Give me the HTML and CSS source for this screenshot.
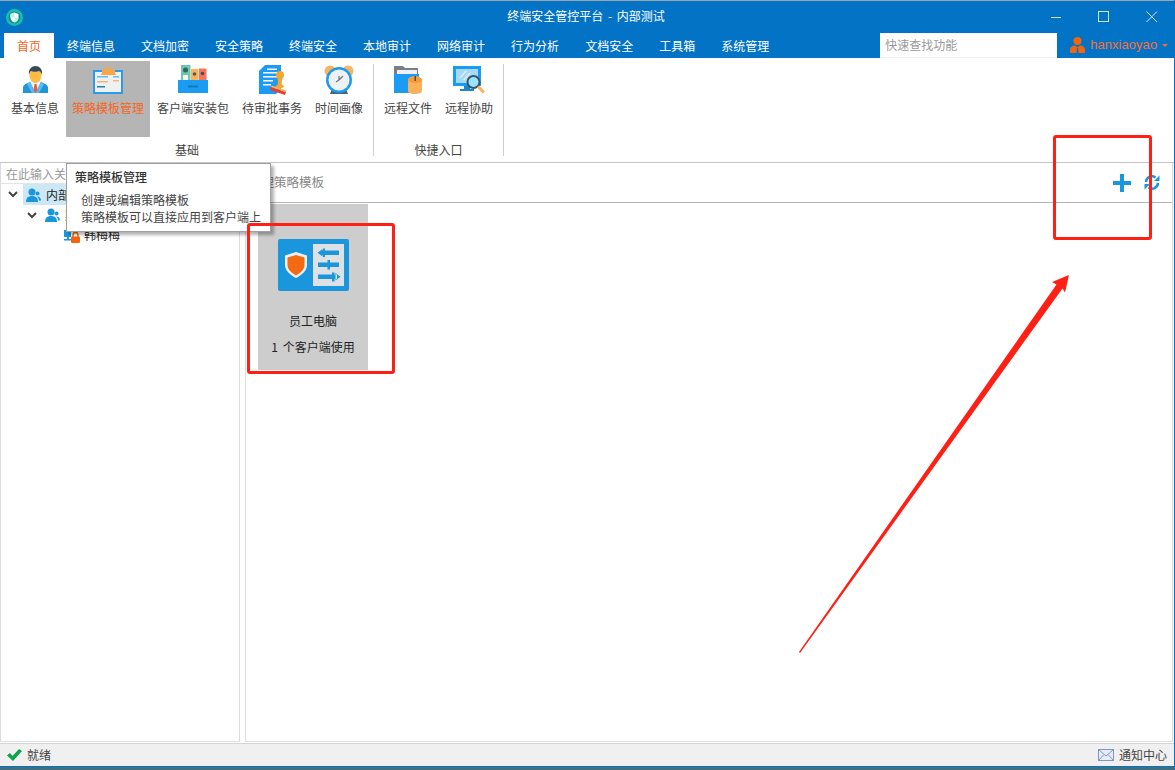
FILE: index.html
```html
<!DOCTYPE html>
<html lang="zh-CN">
<head>
<meta charset="utf-8">
<title>终端安全管控平台 - 内部测试</title>
<link rel="stylesheet" href="styles.css">
</head>
<body>
<div class="app">
  <div class="topstrip"></div>
  <header class="titlebar">
    <svg class="logo" width="17" height="17" viewBox="0 0 17 17"><circle cx="8.5" cy="8.5" r="8.5" fill="#1bbfa8"/><circle cx="8.5" cy="8.5" r="6" fill="#0b8f9c"/><path d="M8.5 3.5l4 1.5v3.5c0 2.6-1.8 4.2-4 5-2.2-.8-4-2.4-4-5V5z" fill="#fff"/><path d="M8.5 3.5V8.5H4.5V5zM8.5 8.5h4c0 2.6-1.8 4.2-4 5z" fill="#bff0e6"/></svg>
    <div class="title">终端安全管控平台 - 内部测试</div>
    <div class="winctrls">
      <svg width="12" height="12" viewBox="0 0 12 12"><path d="M1 6.500h10" stroke="#cfe3f4" stroke-width="1"/></svg>
      <svg width="12" height="12" viewBox="0 0 12 12"><rect x=".5" y=".5" width="10" height="10" fill="none" stroke="#cfe3f4"/></svg>
      <svg width="12" height="12" viewBox="0 0 12 12"><path d="M.5.500l10.500 10.500M11 .5L.5 11" stroke="#cfe3f4" fill="none"/></svg>
    </div>
  </header>
  <nav class="tabbar">
    <a class="tab active">首页</a>
    <a class="tab">终端信息</a>
    <a class="tab">文档加密</a>
    <a class="tab">安全策略</a>
    <a class="tab">终端安全</a>
    <a class="tab">本地审计</a>
    <a class="tab">网络审计</a>
    <a class="tab">行为分析</a>
    <a class="tab">文档安全</a>
    <a class="tab">工具箱</a>
    <a class="tab">系统管理</a>
    <div class="quick">快速查找功能</div>
    <div class="user">
      <svg width="15" height="16" viewBox="0 0 15 16"><circle cx="7.500" cy="4" r="4" fill="#f2640f"/><path d="M0 16v-3c0-3 2.500-4.500 5-4.500l2.500 2 2.500-2c2.500 0 5 1.500 5 4.500v3z" fill="#f2640f"/><path d="M7 11h1l.5 5h-2z" fill="#0273c5"/></svg>
      <span class="uname">hanxiaoyao</span>
      <i class="caret"></i>
    </div>
  </nav>

  <section class="ribbon">
    <div class="group">
      <div class="items">
        <div class="item">
          <svg class="ricon" viewBox="0 0 32 30"><path d="M4 28v-6c1-3 5-4 8.500-5.500h8c3.500 1.500 7.500 2.500 8.500 5.500v6z" fill="#1f96dc"/><path d="M11 17l5.500 11 5.500-11-2-1h-7z" fill="#eef4f7"/><path d="M15.500 19h2l1 6-2 3-2-3z" fill="#ea5a45"/><path d="M11 16.500L8 19l5 9h3zM22 16.500l3 2.500-5 9h-3z" fill="#5bbcec"/><ellipse cx="16.500" cy="10" rx="6" ry="8" fill="#fcbd42"/><path d="M10 10c-1-6 3-9 6.500-9S24 4 23 10c-.5-2-1.500-3.500-3-4-2 1-6 1-8 0-1 .5-1.500 2-2 4z" fill="#34495a"/></svg>
          <span>基本信息</span>
        </div>
        <div class="item selected">
          <svg class="ricon" viewBox="0 0 32 30"><rect x="1" y="5" width="30" height="24" fill="#2b9bf0"/><rect x="3" y="7" width="26" height="20" fill="#eef0f2"/><path d="M10 8V4.500h4a2.500 2.500 0 0 1 5 0h4V8l1 2H9z" fill="#f8a742"/><path d="M5 11h11v1.500H5zM21 11h6v1.500h-6z" fill="#62bdf2"/><path d="M5 16h11v1.500H5zM21 15h6v1.500h-6z" fill="#f8b37a"/><path d="M5 21h8v1.500H5z" fill="#1f7fb8"/></svg>
          <span>策略模板管理</span>
        </div>
        <div class="item">
          <svg class="ricon" viewBox="0 0 32 30"><path d="M4 0h9.500v16H4z" fill="#6ec6ae"/><circle cx="8.500" cy="5" r="2.500" fill="#35606a"/><rect x="6" y="10" width="5" height="5" fill="#f4f6f6"/><path d="M14 4h7.500v12H14z" fill="#f9b15b"/><circle cx="17.500" cy="9" r="1.800" fill="#5a5a5a"/><path d="M22 3.500h7.500V16H22z" fill="#f7735c"/><circle cx="25.500" cy="8.500" r="1.800" fill="#4d4d4d"/><rect x="1" y="15" width="30" height="13" fill="#1c9bf2"/><rect x="11" y="20.500" width="10" height="2" fill="#0f7fa8"/></svg>
          <span>客户端安装包</span>
        </div>
        <div class="item">
          <svg class="ricon" viewBox="0 0 32 30"><path d="M9 0h16v24l-5 5H3V6z" fill="#1c9bf2"/><path d="M7 7h14v1.500H7zM7 11h14v1.500H7zM7 15h10v1.500H7zM7 19h8v1.500H7zM11 3.500h10V5H11z" fill="#fff"/><circle cx="24" cy="10" r="4" fill="#f5a62f"/><path d="M21.500 13h5l-1 6 3 3-9 3-.5-3 3-3z" fill="#f5a62f"/><path d="M15 22l15 5-1 3-15-5z" fill="#e8402f"/><path d="M15.500 20.500l15 5-.5 1.500-15-5z" fill="#f9b15b"/></svg>
          <span>待审批事务</span>
        </div>
        <div class="item">
          <svg class="ricon" viewBox="0 0 32 30"><circle cx="7" cy="6" r="5.500" fill="#fbb45e"/><circle cx="25" cy="6" r="5.500" fill="#fbb45e"/><path d="M7 29l2-5h14l2 5z" fill="#4a6275"/><circle cx="16" cy="15" r="13" fill="#1c9bf2"/><circle cx="16" cy="15" r="10.500" fill="#eef2f3"/><path d="M16 15l4-4M16 15l-3 2M16 15v-4" stroke="#6b7a83" stroke-width="1.300" fill="none"/></svg>
          <span>时间画像</span>
        </div>
      </div>
      <div class="glabel">基础</div>
    </div>
    <div class="sep"></div>
    <div class="group">
      <div class="items">
        <div class="item">
          <svg class="ricon" viewBox="0 0 32 30"><path d="M2 1h9l2 2h13v8H2z" fill="#7b7f84"/><rect x="5" y="5" width="20" height="7" fill="#eef0f2"/><path d="M2 9h25v19H2z" fill="#1c9bf2"/><path d="M16 15c0-5 14-5 14 0v11c0 4-14 4-14 0z" fill="#fbb05c"/><ellipse cx="23" cy="15" rx="7" ry="3" fill="#f59a3b"/><rect x="22.500" y="11" width="1.500" height="5" fill="#6b4a23"/></svg>
          <span>远程文件</span>
        </div>
        <div class="item">
          <svg class="ricon" viewBox="0 0 32 30"><rect y="1" width="28" height="20" fill="#1c9bf2"/><rect x="3" y="4" width="22" height="14" fill="#a6d9f6"/><path d="M6 13l6-7h2l-6 7zM10 15l6-7h2l-6 7z" fill="#d8effb"/><path d="M11 21h6v3h4v2H7v-2h4z" fill="#1c87cc"/><circle cx="20.500" cy="17" r="6" fill="#9de2fb" stroke="#33566b" stroke-width="2"/><path d="M25 21.500l6 6" stroke="#fbb05c" stroke-width="3"/></svg>
          <span>远程协助</span>
        </div>
      </div>
      <div class="glabel">快捷入口</div>
    </div>
    <div class="sep"></div>
  </section>

  <main class="main">
    <aside class="side">
      <div class="search">在此输入关键字搜索</div>
      <ul class="tree">
        <li class="node">
          <svg class="chev" width="10" height="7" viewBox="0 0 10 7"><path d="M1 1l4 4 4-4" fill="none" stroke="#444" stroke-width="2"/></svg>
          <div class="nodebody current">
            <svg class="people" width="15" height="14" viewBox="0 0 15 14"><circle cx="6" cy="4" r="3.500" fill="#1a96dc"/><path d="M0 14c0-4 2-6 6-6s6 2 6 6z" fill="#1a96dc"/><circle cx="11.500" cy="5.500" r="2" fill="#1a96dc"/><path d="M11 8.500c2.500 0 4 1.500 4 4h-2c0-1.500-.8-3-2-4z" fill="#1a96dc"/></svg>
            <span>内部测试</span>
          </div>
        </li>
        <li class="node lvl2">
          <svg class="chev" width="10" height="7" viewBox="0 0 10 7"><path d="M1 1l4 4 4-4" fill="none" stroke="#444" stroke-width="2"/></svg>
          <div class="nodebody">
            <svg class="people" width="15" height="14" viewBox="0 0 15 14"><circle cx="6" cy="4" r="3.500" fill="#1a96dc"/><path d="M0 14c0-4 2-6 6-6s6 2 6 6z" fill="#1a96dc"/><circle cx="11.500" cy="5.500" r="2" fill="#1a96dc"/><path d="M11 8.500c2.500 0 4 1.500 4 4h-2c0-1.500-.8-3-2-4z" fill="#1a96dc"/></svg>
            <span>默认分组</span>
          </div>
        </li>
        <li class="node lvl3">
          <svg class="client" width="16" height="16" viewBox="0 0 16 16"><path d="M0 3h7v7H5v2h2v1.500H0V12h3v-2H0z" fill="#1a96dc"/><path d="M9 10V8a2.500 2.500 0 0 1 5 0v2" fill="none" stroke="#f2640f" stroke-width="1.300"/><rect x="7" y="9.500" width="9" height="6.500" rx="1" fill="#f2640f"/></svg>
          <span>韩梅梅</span>
        </li>
      </ul>
    </aside>
    <section class="content">
      <div class="toolbar">
        <span class="crumb">管理策略模板</span>
        <div class="tools">
          <svg width="18" height="18" viewBox="0 0 18 18"><path d="M7 0h4v7h7v4h-7v7H7v-7H0V7h7z" fill="#1a96dc"/></svg>
          <svg width="16" height="17" viewBox="0 0 16 17"><path d="M2 8A6 6 0 0 1 11.500 3.500M14 9A6 6 0 0 1 4.500 13.500" fill="none" stroke="#1a96dc" stroke-width="2.500"/><path d="M15.500 1.500V7H10zM.5 15.500V10H6z" fill="#1a96dc"/></svg>
        </div>
      </div>
      <div class="cards">
        <div class="card">
          <svg class="cardicon" width="71" height="52" viewBox="0 0 71 52"><rect width="71" height="52" rx="2" fill="#1a96dc"/><rect x="35" y="5" width="31" height="42" fill="#dde1e4"/><path d="M18 13l11 3.500v9c0 6-4.500 10-11 13.500C11.500 35.500 7 31.500 7 25.500v-9z" fill="#eef0ee"/><path d="M18 16l8.500 2.500v7.500c0 4.500-3.500 7.500-8.500 10.500-5-3-8.500-6-8.500-10.500v-7.500z" fill="#f36a13"/><path d="M43 11.500h18v4.500H43zM39.500 13.750l5-3.750v7.500zM45 9.500h2v8.500h-2zM40 23.500h21v4.500H40zM49.500 21h2.500v9.500h-2.500zM40 35.500h19v4.500H40zM62.500 37.750l-5-3.750v7.500zM54 33.500h2.500v9h-2.500z" fill="#1a96dc"/></svg>
          <div class="cardname">员工电脑</div>
          <div class="cardmeta">1 个客户端使用</div>
        </div>
      </div>
    </section>
  </main>

  <footer class="status">
    <svg width="15" height="12" viewBox="0 0 15 12"><path d="M0 6.500l3-2.500 2.500 3L12 0l3 2-9 10z" fill="#0ca34a"/></svg>
    <span class="ready">就绪</span>
    <svg class="mail" width="16" height="12" viewBox="0 0 16 12"><rect x=".5" y=".5" width="15" height="11" fill="#e6ebf6" stroke="#7f95c4"/><path d="M.5.500L8 7l7.500-6.500M.5 11.500L6 5.500M15.500 11.500L10 5.500" fill="none" stroke="#7f95c4"/></svg>
    <span>通知中心</span>
  </footer>
  <div class="blueline"></div>
  <div class="desktop"></div>

  <div class="tooltip">
    <div class="tiptitle">策略模板管理</div>
    <div class="tiptext">创建或编辑策略模板</div>
    <div class="tiptext">策略模板可以直接应用到客户端上</div>
  </div>
  <div class="mark mark-card"></div>
  <div class="mark mark-tools"></div>
  <svg class="arrow" width="1175" height="770" viewBox="0 0 1175 770"><path d="M799 652L1056.500 284.500 1052 282 1069 275 1065 292.500 1062.500 288.500 800 653z" fill="#ff2015"/></svg>
</div>
</body>
</html>
```
FILE: styles.css
```css
* { box-sizing: border-box; }
html, body { margin: 0; padding: 0; background: #fff; }
body { font: 12px/16px "Noto Sans CJK SC", "Liberation Sans", sans-serif; color: #333; }
ul { list-style: none; margin: 0; padding: 0; }

.app { position: relative; width: 1175px; height: 770px; overflow: hidden; display: flex; flex-direction: column; border-right: 1px solid #0273c5; }
.topstrip { height: 1px; background: #9aa6ac; margin-right: -1px; }

.titlebar { height: 32px; background: #0273c5; display: flex; align-items: center; position: relative; padding: 0 0 0 6px; flex: none; }
.logo { flex: none; }
.title { position: absolute; left: 0; right: 2px; top: 7px; text-align: center; color: #fff; word-spacing: 2px; }
.winctrls { margin-left: auto; display: flex; gap: 36px; padding-right: 16px; }

.tabbar { height: 25px; background: #0273c5; display: flex; align-items: stretch; padding-left: 4px; flex: none; }
.tab { flex: none; padding: 0 13px; color: #fff; line-height: 25px; white-space: nowrap; }
.tab.active { background: #fff; color: #f5651e; }
.quick { flex: none; margin-left: 98px; width: 177px; background: #fff; color: #999; padding: 0 5px; line-height: 24px; border-bottom: 1px solid #eee; white-space: nowrap; }
.user { flex: none; display: flex; align-items: center; padding-left: 13px; padding-bottom: 2px; }
.uname { font: 13px/16px "Liberation Sans", sans-serif; color: #f2703a; margin-left: 5px; letter-spacing: .05px; }
.caret { width: 0; height: 0; border: 3px solid transparent; border-top-color: #f2703a; border-bottom: 0; margin-left: 5px; margin-top: 2px; }

.ribbon { height: 105px; display: flex; padding: 3px 0 0 1px; border-bottom: 1px solid #c4c4c4; flex: none; }
.group { display: flex; flex-direction: column; padding: 0 4px; }
.items { display: flex; gap: 1px; height: 76px; }
.item { display: flex; flex-direction: column; align-items: center; padding: 4px 6px 0; color: #444; }
.item.selected { background: #b5b5b5; color: #f5651e; }
.ricon { width: 32px; height: 30px; margin-bottom: 5px; flex: none; }
.glabel { text-align: center; line-height: 25px; color: #444; }
.sep { width: 1px; height: 92px; margin-top: 3px; background: #d0d0d0; }

.main { flex: 1; display: flex; gap: 5px; min-height: 0; padding-bottom: 1px; }
.side { width: 240px; border: 1px solid #dcdcdc; border-top: 0; flex: none; }
.search { height: 21px; padding-left: 5px; line-height: 21px; color: #999; border-bottom: 1px solid #e4e4e4; white-space: nowrap; overflow: hidden; }
.tree { color: #222; }
.node { display: flex; align-items: center; height: 20px; padding-left: 7px; }
.node:first-child { height: 21px; }
.chev { flex: none; margin-right: 5px; }
.nodebody { display: flex; align-items: center; height: 100%; flex: 1; padding-left: 3px; gap: 5px; }
.nodebody.current { background: #cce8f7; }
.people { flex: none; }
.lvl2 { padding-left: 26px; }
.lvl3 { padding-left: 63px; gap: 4px; }
.client { flex: none; }

.content { flex: 1; display: flex; flex-direction: column; border-right: 1px solid #dcdcdc; border-left: 1px solid #dcdcdc; border-bottom: 1px solid #dcdcdc; margin-right: 1px; }
.toolbar { height: 40px; flex: none; display: flex; align-items: center; padding: 0 12px 0 3px; border-bottom: 1px solid #b4b4b4; color: #888; }
.crumb { font-size: 12.500px; margin-top: -2px; white-space: nowrap; }
.tools { margin-left: auto; display: flex; align-items: center; gap: 13px; }
.cards { padding: 1px 0 0 12px; }
.card { width: 110px; height: 166px; background: #cdcdcd; display: flex; flex-direction: column; align-items: center; padding-top: 35px; color: #222; }
.cardicon { flex: none; margin-bottom: 22px; }
.cardname { height: 26px; }
.cardmeta { word-spacing: 2px; white-space: nowrap; }

.status { height: 23px; background: #f0f0f0; border-top: 1px solid #d4d4d4; display: flex; align-items: center; padding: 0 7px; gap: 5px; flex: none; color: #444; }
.mail { margin-left: auto; }
.blueline { height: 1px; background: #0273c5; flex: none; }
.desktop { height: 3px; background: #3f6f80; flex: none; margin-right: -1px; }

.tooltip { position: absolute; left: 66px; top: 163px; width: 205px; height: 69px; background: #fff; border: 1px solid #a0a0a0; box-shadow: 3px 3px 3px rgba(0,0,0,.3); padding: 5px 8px; color: #444; }
.tiptitle { font-weight: 500; color: #333; margin-bottom: 6px; }
.tiptext { padding-left: 6px; line-height: 17px; white-space: nowrap; }

.mark { position: absolute; border: 3px solid #ff2015; border-radius: 3px; }
.mark-card { left: 247px; top: 223px; width: 148px; height: 151px; }
.mark-tools { left: 1053px; top: 135px; width: 99px; height: 105px; }
.arrow { position: absolute; left: 0; top: 0; pointer-events: none; }
```
